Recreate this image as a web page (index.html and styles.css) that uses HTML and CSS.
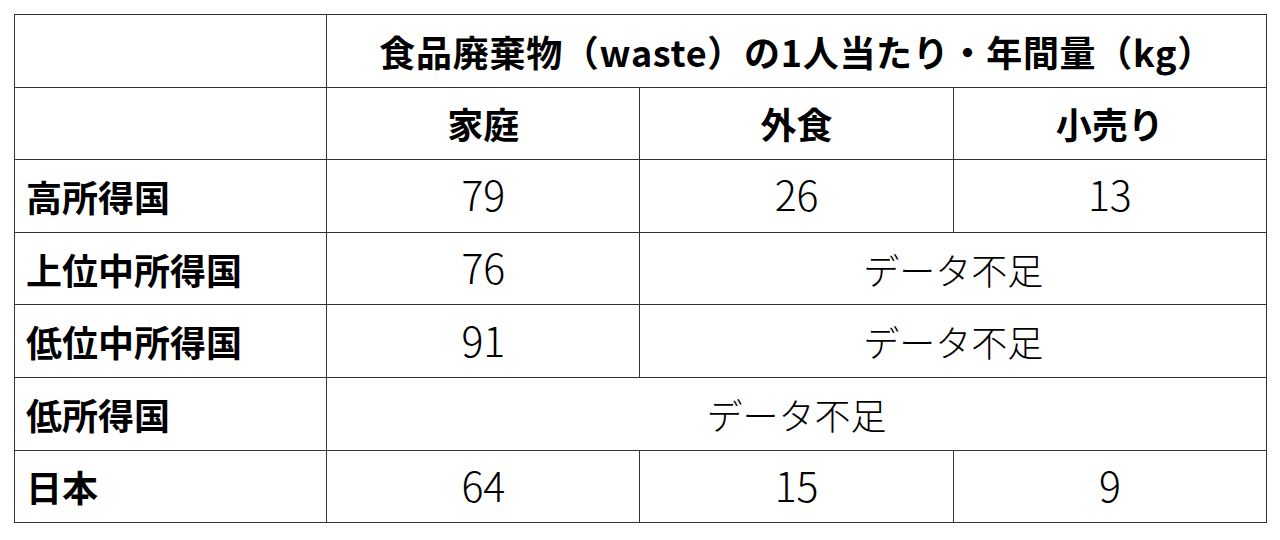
FILE: index.html
```html
<!DOCTYPE html>
<html lang="ja">
<head>
<meta charset="utf-8">
<link rel="stylesheet" href="styles.css">
</head>
<body>
<table class="waste">
  <colgroup>
    <col class="c-label"><col class="c-data"><col class="c-data"><col class="c-data">
  </colgroup>
  <tr>
    <td></td>
    <th class="title" colspan="3">食品廃棄物（waste）の1人当たり・年間量（kg）</th>
  </tr>
  <tr>
    <td></td>
    <th>家庭</th>
    <th>外食</th>
    <th>小売り</th>
  </tr>
  <tr>
    <th class="label">高所得国</th>
    <td class="num">79</td>
    <td class="num">26</td>
    <td class="num">13</td>
  </tr>
  <tr>
    <th class="label">上位中所得国</th>
    <td class="num">76</td>
    <td class="na" colspan="2">データ不足</td>
  </tr>
  <tr>
    <th class="label">低位中所得国</th>
    <td class="num">91</td>
    <td class="na" colspan="2">データ不足</td>
  </tr>
  <tr>
    <th class="label">低所得国</th>
    <td class="na" colspan="3">データ不足</td>
  </tr>
  <tr>
    <th class="label">日本</th>
    <td class="num">64</td>
    <td class="num">15</td>
    <td class="num">9</td>
  </tr>
</table>
</body>
</html>
```

FILE: styles.css
```css
html, body {
  margin: 0;
  padding: 0;
  background: #ffffff;
}

body {
  padding: 14px;
  font-family: "Noto Sans CJK JP", "Noto Sans", sans-serif;
  color: #000;
}

.waste {
  border-collapse: collapse;
  table-layout: fixed;
  width: 1253px;
}

.c-label { width: 312px; }
.c-data { width: 313px; }

.waste tr {
  height: 72.6px;
}

.waste th,
.waste td {
  border: 1px solid #333333;
  padding: 0;
  font-size: 36px;
  line-height: 1;
  text-align: center;
  vertical-align: middle;
}

.waste th {
  font-weight: 700;
}

.waste th.title {
  letter-spacing: 0.7px;
}

.waste th.label {
  text-align: left;
  padding-left: 11px;
}

.waste td.num {
  font-weight: 300;
  font-size: 41px;
  padding-bottom: 4px;
}

.waste td.na {
  font-weight: 300;
}
```
